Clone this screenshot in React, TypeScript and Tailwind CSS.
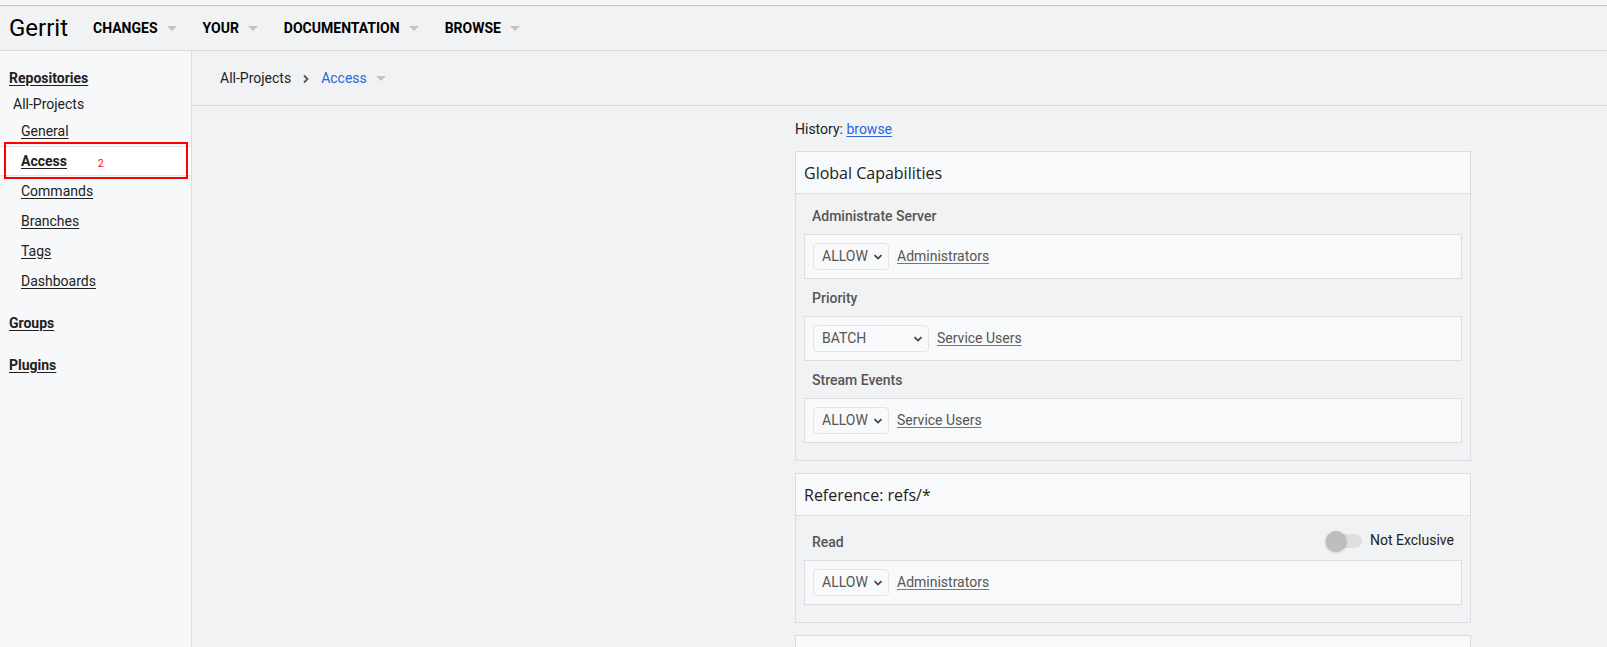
import React from 'react';

const navItems = ['CHANGES', 'YOUR', 'DOCUMENTATION', 'BROWSE'];

function Caret({ color = '#c4c4c4' }: { color?: string }) {
  return (
    <svg width="10" height="5" viewBox="0 0 10 5" className="shrink-0">
      <path d="M0 0h10L5 5z" fill={color} />
    </svg>
  );
}

function Select({ value, width }: { value: string; width: string }) {
  return (
    <div className={`flex h-[27px] items-center justify-between rounded-[4px] border border-[#e3e4e6] bg-[#f8f9fa] pl-[8px] pr-[5px] text-[14px] text-[#555]  ${width}`}>
      <span>{value}</span>
      <svg width="10" height="6" viewBox="0 0 10 6">
        <path d="M1.5 1.2l3.5 3.4 3.5-3.4" fill="none" stroke="#444" strokeWidth="1.8" />
      </svg>
    </div>
  );
}

function Rule({ action, group, wide }: { action: string; group: string; wide?: boolean }) {
  return (
    <div className="flex h-[45px] items-center gap-[8px] border border-[#dcdde0] bg-[#f8f9fa] px-[8px]">
      <Select value={action} width={wide ? 'w-[116px]' : 'w-[76px]'} />
      <a className="text-[14px] text-[#555] underline underline-offset-2 decoration-[#777]">{group}</a>
    </div>
  );
}

function Label({ children }: { children: React.ReactNode }) {
  return (
    <div className="flex h-[37px] items-center pl-[8px] pt-[2px] text-[14px] font-medium text-[#555]">{children}</div>
  );
}

export default function App() {
  return (
    <div className="h-screen overflow-hidden bg-[#f1f2f4] font-['Roboto',sans-serif] text-[#212121]">
      <div className="h-[6px] border-b border-[#c2c3c5] bg-[#f5f5f5]" />
      <header className="flex h-[45px] items-center border-b border-[#d9dadc] bg-[#f1f2f4] pl-[9px]">
        <span className="mr-[25px] text-[24px] leading-none text-black">Gerrit</span>
        {navItems.map((n) => (
          <div key={n} className="mr-[26px] flex items-center gap-[9px]">
            <span className="text-[14px] font-bold text-black">{n}</span>
            <Caret />
          </div>
        ))}
      </header>

      <div className="flex h-full">
        <aside className="w-[192px] shrink-0 border-r border-[#dcdde0] bg-[#f7f8fa] pt-[13px] text-[14px]">
          <div className="flex h-[29px] items-center pl-[9px]">
            <a className="font-bold underline underline-offset-2">Repositories</a>
          </div>
          <div className="flex h-[23px] items-center pl-[13px]">All-Projects</div>
          <div className="flex h-[30px] items-center pl-[21px]">
            <a className="underline underline-offset-2">General</a>
          </div>
          <div className="relative flex h-[30px] items-center border-y border-[#e2e3e5] bg-white pl-[21px]">
            <a className="font-bold underline underline-offset-2">Access</a>
            <span className="ml-[31px] mt-[4px] text-[10px] text-[#ff0000]">2</span>
            <div className="absolute bottom-[-4px] left-[4px] right-[3px] top-[-5px] border-2 border-[#ff0000]" />
          </div>
          {['Commands', 'Branches', 'Tags', 'Dashboards'].map((t) => (
            <div key={t} className="flex h-[30px] items-center pl-[21px]">
              <a className="underline underline-offset-2">{t}</a>
            </div>
          ))}
          <div className="mt-[12px] flex h-[30px] items-center pl-[9px]">
            <a className="font-bold underline underline-offset-2">Groups</a>
          </div>
          <div className="mt-[12px] flex h-[30px] items-center pl-[9px]">
            <a className="font-bold underline underline-offset-2">Plugins</a>
          </div>
        </aside>

        <main className="flex-1">
          <div className="flex h-[55px] items-center border-b border-[#d9dadc] pl-[28px] pt-[1px] text-[14px]">
            <span>All-Projects</span>
            <svg width="8" height="10" viewBox="0 0 8 10" className="mx-[11px]">
              <path d="M2 1.5l3.5 3.5L2 8.5" fill="none" stroke="#555" strokeWidth="1.8" />
            </svg>
            <span className="text-[#2a66d9]">Access</span>
            <span className="ml-[9px]">
              <Caret />
            </span>
          </div>

          <div className="ml-[603px] w-[676px] pt-[14px]">
            <div className="flex h-[19px] items-center text-[14px]">
              History:&nbsp;<a className="text-[#2a66d9] underline underline-offset-2">browse</a>
            </div>

            <section className="mt-[12px] border border-[#dcdde0]">
              <div className="flex h-[42px] items-center border-b border-dotted border-[#c8c9cb] bg-[#f8f9fa] pl-[8px] font-['Open_Sans',sans-serif] text-[16px] text-[#212121]">
                Global Capabilities
              </div>
              <div className="px-[8px] pb-[17px] pt-[3px]">
                <Label>Administrate Server</Label>
                <Rule action="ALLOW" group="Administrators" />
                <Label>Priority</Label>
                <Rule action="BATCH" group="Service Users" wide />
                <Label>Stream Events</Label>
                <Rule action="ALLOW" group="Service Users" />
              </div>
            </section>

            <section className="mt-[12px] border border-[#dcdde0]">
              <div className="flex h-[42px] items-center border-b border-dotted border-[#c8c9cb] bg-[#f8f9fa] pl-[8px] font-['Open_Sans',sans-serif] text-[16px] text-[#212121]">
                Reference: refs/*
              </div>
              <div className="px-[8px] pb-[17px] pt-[3px]">
                <div className="flex h-[41px] items-center justify-between pl-[8px] pr-[8px]">
                  <span className="mt-[6px] text-[14px] font-medium text-[#555]">Read</span>
                  <div className="mt-[2px] flex items-center gap-[8px]">
                    <div className="relative h-[14px] w-[31px] rounded-full bg-[#dedfe1]">
                      <div className="absolute left-[-5px] top-[-3px] h-[20px] w-[20px] rounded-full bg-[#bdbdbd] shadow-[0_1px_3px_rgba(0,0,0,0.35)]" />
                    </div>
                    <span className="text-[14px] text-[#212121]">Not Exclusive</span>
                  </div>
                </div>
                <Rule action="ALLOW" group="Administrators" />
              </div>
            </section>

            <section className="mt-[12px] h-[60px] border border-[#dcdde0] bg-[#f8f9fa]" />
          </div>
        </main>
      </div>
    </div>
  );
}
